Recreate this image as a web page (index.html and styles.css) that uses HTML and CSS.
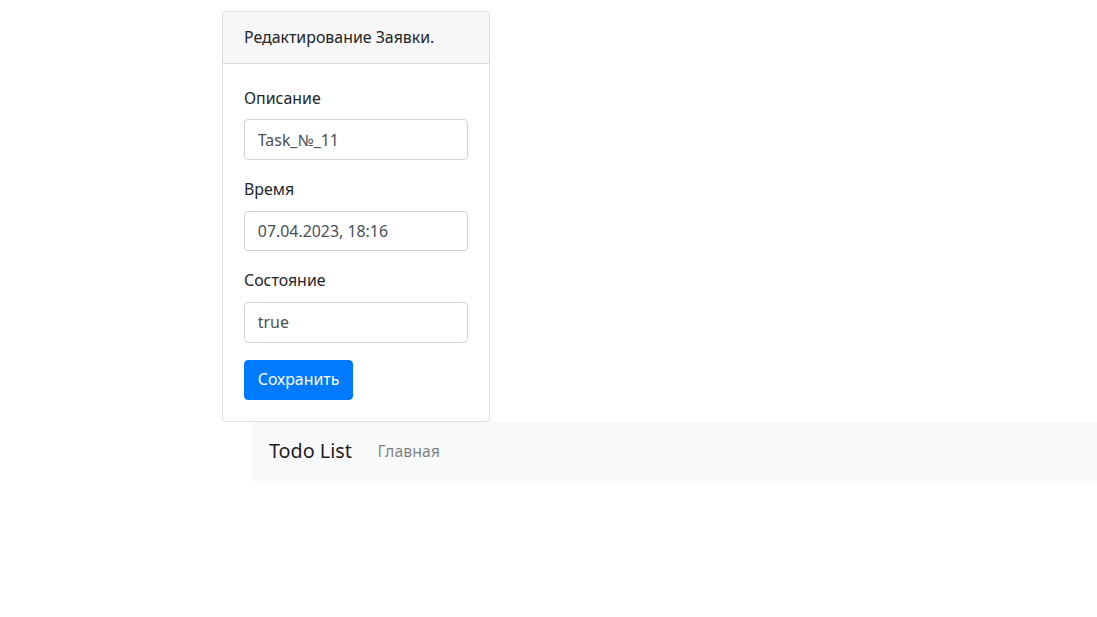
FILE: index.html
```html
<!DOCTYPE html>
<html lang="ru">
<head>
<meta charset="utf-8">
<title>Todo List</title>
<link rel="stylesheet" href="styles.css">
</head>
<body>
<div class="card">
  <div class="card-header">Редактирование Заявки.</div>
  <div class="card-body">
    <div class="form-group">
      <label class="label">Описание</label>
      <input class="input" type="text" value="Task_№_11">
    </div>
    <div class="form-group">
      <label class="label">Время</label>
      <input class="input" type="text" value="07.04.2023, 18:16">
    </div>
    <div class="form-group">
      <label class="label">Состояние</label>
      <input class="input" type="text" value="true">
    </div>
    <button class="btn" type="button">Сохранить</button>
  </div>
</div>
<nav class="navbar">
  <span class="brand">Todo List</span>
  <a class="nav-link">Главная</a>
</nav>
</body>
</html>
```

FILE: styles.css
```css
* { box-sizing: border-box; }
html, body { margin: 0; padding: 0; background: #fff; }
body {
  font-family: "Noto Sans", "Open Sans", sans-serif;
  font-size: 15.9px;
  line-height: 25.6px;
  color: #212529;
  padding-top: 11px;
}
.card {
  width: 268px;
  margin-left: 222px;
  border: 1px solid rgba(0,0,0,.125);
  border-radius: 4px;
  background: #fff;
}
.card-header {
  padding: 12.8px 21px;
  background: rgba(0,0,0,.03);
  border-bottom: 1px solid rgba(0,0,0,.125);
  height: 52px;
}
.card-body {
  padding: 21.5px 21px 21.3px;
  display: flex;
  flex-direction: column;
  align-items: flex-start;
}
.form-group {
  display: flex;
  flex-direction: column;
  width: 100%;
  margin-bottom: 16.9px;
}
.label {
  display: block;
  height: 25.6px;
  margin-bottom: 8.4px;
}
.input {
  display: block;
  width: 100%;
  height: 40.5px;
  padding: 6.4px 12.8px;
  font: inherit;
  color: #495057;
  border: 1px solid #ced4da;
  border-radius: 4px;
  background: #fff;
  outline: none;
}
.btn {
  height: 40px;
  padding: 6.4px 12.8px;
  font: inherit;
  color: #fff;
  background: #007bff;
  border: 1px solid #007bff;
  border-radius: 4px;
}
.navbar {
  margin-left: 252px;
  height: 59px;
  background: #f8f9fa;
  display: flex;
  align-items: center;
  padding: 0 17px;
}
.brand {
  font-size: 19.8px;
  line-height: 32px;
  color: rgba(0,0,0,.9);
  margin-right: 17px;
}
.nav-link {
  padding: 8.5px;
  color: rgba(0,0,0,.5);
}
```
